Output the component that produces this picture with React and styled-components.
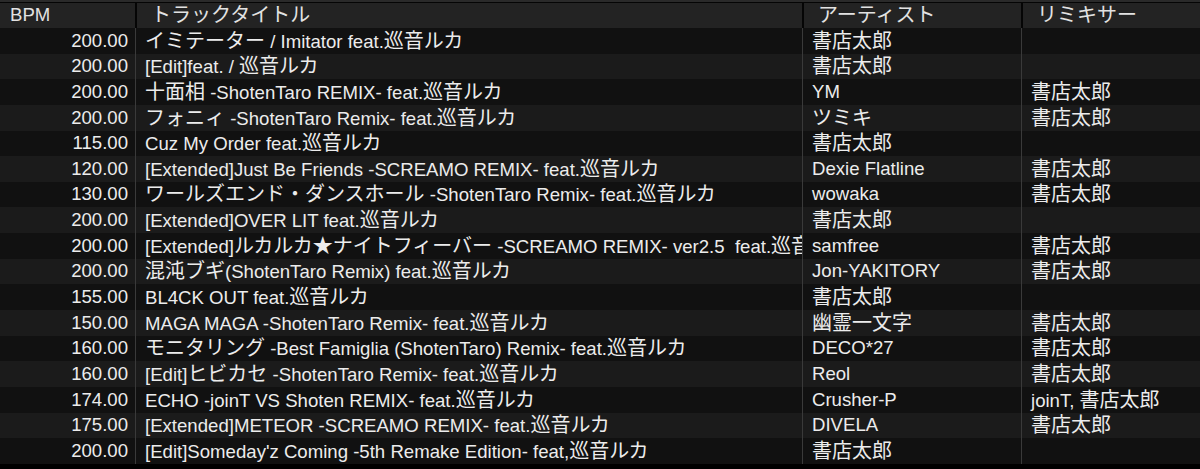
import React from 'react';
import styled, { createGlobalStyle } from 'styled-components';

const GlobalStyle = createGlobalStyle`
  html, body {
    margin: 0;
    padding: 0;
    background: #000;
  }
  body {
    font-family: "Liberation Sans", Arial, "Noto Sans CJK JP", sans-serif;
    color: #ececec;
  }
`;

const COLUMNS = '135px 667px 219px 1fr';

// Whole track list
const Table = styled.div`
  width: 1200px;
  height: 469px;
  overflow: hidden;
  background: #000;
  border-top: 2px solid #2a2a2a;
  box-sizing: border-box;
`;

const HeaderRow = styled.div`
  display: grid;
  grid-template-columns: ${COLUMNS};
  height: 25px;
  background: #232323;
  border-top: 1px solid #050505;
`;

const HeaderCell = styled.div`
  display: flex;
  align-items: center;
  padding-left: ${(p) => p.$pad || 14}px;
  font-size: 18.6px;
  line-height: 1.1;
  color: #e2e2e2;
  border-left: ${(p) => (p.$first ? 'none' : '2px solid #050505')};
  white-space: nowrap;
  overflow: hidden;
`;

const Row = styled.div`
  display: grid;
  grid-template-columns: ${COLUMNS};
  height: 25.65px;
  background: ${(p) => (p.$even ? '#1b1b1b' : '#111111')};
`;

const Cell = styled.div`
  display: flex;
  align-items: center;
  justify-content: ${(p) => (p.$right ? 'flex-end' : 'flex-start')};
  padding: ${(p) => (p.$right ? '0 7px 0 0' : '0 0 0 9px')};
  font-size: 18.6px;
  line-height: 1.1;
  color: #ececec;
  border-left: ${(p) => (p.$first ? 'none' : '1px solid #3a3a3a')};
  white-space: pre;
  overflow: hidden;
`;

// Japanese runs render a bit larger than the latin text
const Wide = styled.span`
  font-family: "Noto Sans CJK JP", sans-serif;
  font-size: 20px;
  font-weight: 400;
  line-height: 1;
`;

const CJK = /([\u3000-\u30ff\u4e00-\u9fff\uff00-\uffef★]+)/;

const Text = ({ children }) => (
  <span>
    {String(children)
      .split(CJK)
      .map((part, i) => (i % 2 === 1 ? <Wide key={i}>{part}</Wide> : part))}
  </span>
);

const tracks = [
  ['200.00', 'イミテーター / Imitator feat.巡音ルカ', '書店太郎', ''],
  ['200.00', '[Edit]feat. / 巡音ルカ', '書店太郎', ''],
  ['200.00', '十面相 -ShotenTaro REMIX- feat.巡音ルカ', 'YM', '書店太郎'],
  ['200.00', 'フォニィ -ShotenTaro Remix- feat.巡音ルカ', 'ツミキ', '書店太郎'],
  ['115.00', 'Cuz My Order feat.巡音ルカ', '書店太郎', ''],
  ['120.00', '[Extended]Just Be Friends -SCREAMO REMIX- feat.巡音ルカ', 'Dexie Flatline', '書店太郎'],
  ['130.00', 'ワールズエンド・ダンスホール -ShotenTaro Remix- feat.巡音ルカ', 'wowaka', '書店太郎'],
  ['200.00', '[Extended]OVER LIT feat.巡音ルカ', '書店太郎', ''],
  ['200.00', '[Extended]ルカルカ★ナイトフィーバー -SCREAMO REMIX- ver2.5  feat.巡音ルカ', 'samfree', '書店太郎'],
  ['200.00', '混沌ブギ(ShotenTaro Remix) feat.巡音ルカ', 'Jon-YAKITORY', '書店太郎'],
  ['155.00', 'BL4CK OUT feat.巡音ルカ', '書店太郎', ''],
  ['150.00', 'MAGA MAGA -ShotenTaro Remix- feat.巡音ルカ', '幽霊一文字', '書店太郎'],
  ['160.00', 'モニタリング -Best Famiglia (ShotenTaro) Remix- feat.巡音ルカ', 'DECO*27', '書店太郎'],
  ['160.00', '[Edit]ヒビカセ -ShotenTaro Remix- feat.巡音ルカ', 'Reol', '書店太郎'],
  ['174.00', 'ECHO -joinT VS Shoten REMIX- feat.巡音ルカ', 'Crusher-P', 'joinT, 書店太郎'],
  ['175.00', '[Extended]METEOR -SCREAMO REMIX- feat.巡音ルカ', 'DIVELA', '書店太郎'],
  ['200.00', '[Edit]Someday\'z Coming -5th Remake Edition- feat,巡音ルカ', '書店太郎', ''],
];

const App = () => (
  <>
    <GlobalStyle />
    <Table>
      <HeaderRow>
        <HeaderCell $first $pad={10}>BPM</HeaderCell>
        <HeaderCell><Text>トラックタイトル</Text></HeaderCell>
        <HeaderCell><Text>アーティスト</Text></HeaderCell>
        <HeaderCell><Text>リミキサー</Text></HeaderCell>
      </HeaderRow>
      {tracks.map(([bpm, title, artist, remixer], i) => (
        <Row key={i} $even={i % 2 === 1}>
          <Cell $first $right>{bpm}</Cell>
          <Cell><Text>{title}</Text></Cell>
          <Cell><Text>{artist}</Text></Cell>
          <Cell><Text>{remixer}</Text></Cell>
        </Row>
      ))}
    </Table>
  </>
);

export default App;
